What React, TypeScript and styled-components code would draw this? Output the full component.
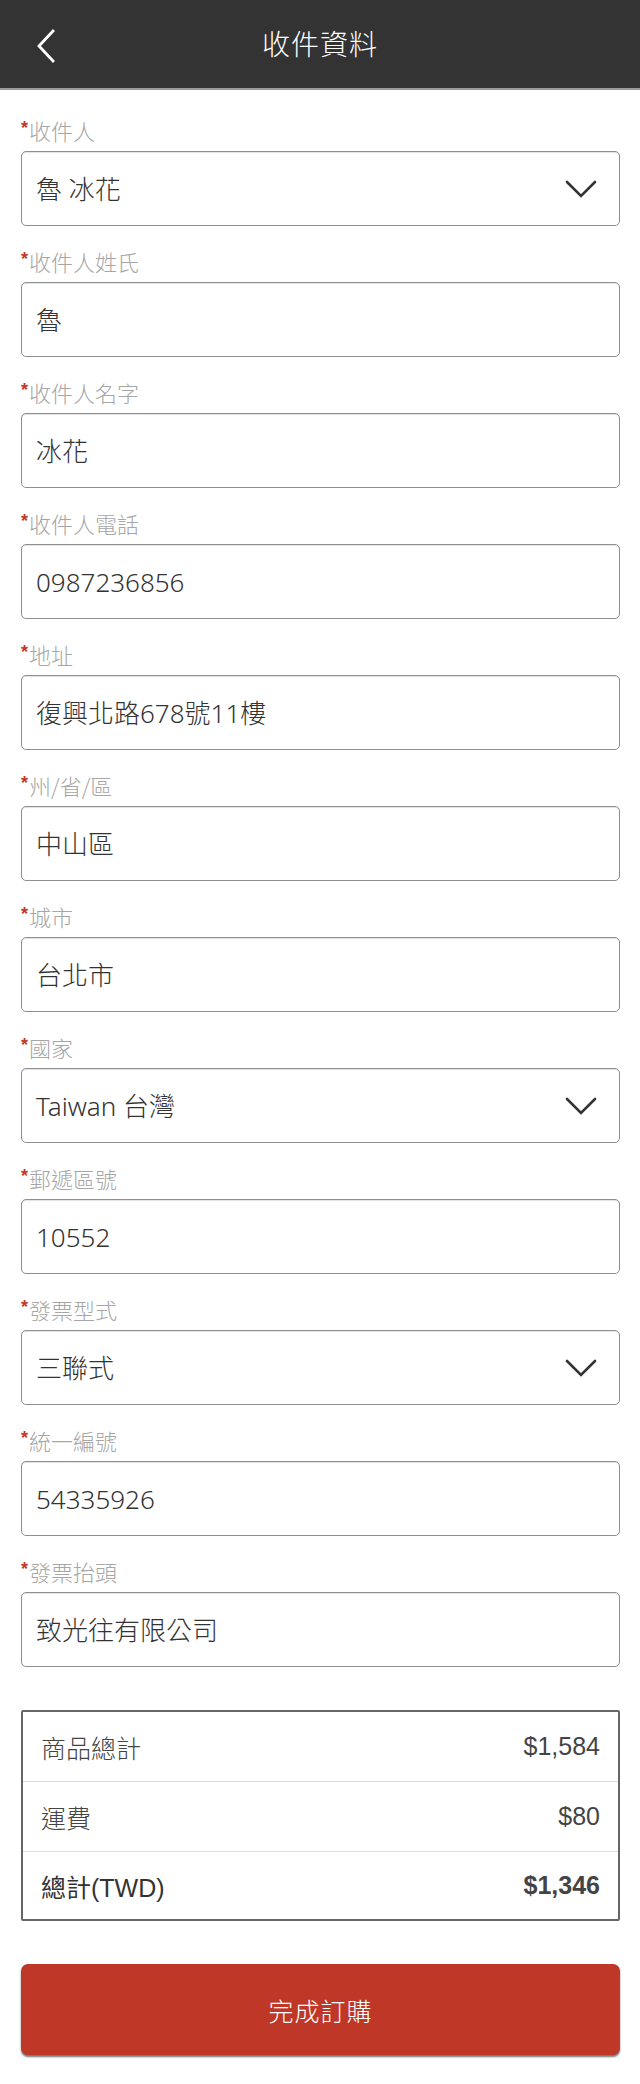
import React from "react";
import styled, { createGlobalStyle } from "styled-components";

const Global = createGlobalStyle`
  html, body { margin: 0; padding: 0; background: #fff; }
  body { font-family: "Liberation Sans", Arial, "Noto Sans CJK TC", sans-serif; }
  * { box-sizing: border-box; }
`;

const Page = styled.div`
  width: 640px;
  min-height: 2084px;
  background: #fff;
  display: flex;
  flex-direction: column;
`;

const Header = styled.header`
  height: 90px;
  background: #333333;
  border-bottom: 2px solid #9a9a9a;
  display: flex;
  align-items: center;
  justify-content: center;
  position: relative;
  flex-shrink: 0;
`;

const BackButton = styled.button`
  position: absolute;
  left: 30px;
  top: 26px;
  width: 32px;
  height: 40px;
  border: 0;
  background: transparent;
  padding: 0;
  display: flex;
  align-items: center;
  justify-content: center;
  cursor: pointer;
`;

const Title = styled.h1`
  margin: 0;
  color: #fff;
  font-family: "Noto Sans CJK TC", sans-serif;
  font-weight: 300;
  font-size: 28px;
  letter-spacing: 1px;
  line-height: 1;
  margin-top: -2px;
`;

const Form = styled.main`
  display: flex;
  flex-direction: column;
  padding: 28px 20px 31px 21px;
`;

const FieldGroup = styled.div`
  display: flex;
  flex-direction: column;
  margin-bottom: 23px;
`;

const Label = styled.label`
  font-family: "Noto Sans CJK TC", sans-serif;
  font-weight: 300;
  font-size: 22px;
  line-height: 24px;
  height: 24px;
  color: #a6a6a6;
  margin-bottom: 9px;
  display: flex;
  align-items: flex-start;
`;

const Star = styled.span`
  color: #c0392b;
  font-family: "Liberation Sans", Arial, sans-serif;
  font-weight: 700;
  font-size: 18px;
  line-height: 20px;
  margin-right: 1px;
`;

const Box = styled.div`
  height: 75px;
  border: 1.5px solid #8f8f8f;
  border-radius: 5px;
  box-shadow: inset 0 1px 1px rgba(0, 0, 0, 0.12);
  background: #fff;
  display: flex;
  align-items: center;
  padding: 0 22px 0 14px;
`;

const Value = styled.span`
  flex: 1;
  font-family: "Noto Sans", "Noto Sans CJK TC", sans-serif;
  font-weight: 300;
  font-size: 26px;
  color: #333;
  line-height: 1;
`;

const Summary = styled.section`
  margin-top: 20px;
  border: 2px solid #666;
  border-radius: 2px;
  display: flex;
  flex-direction: column;
`;

const Row = styled.div<{ $last?: boolean }>`
  height: ${(p) => (p.$last ? "67px" : "70px")};
  display: flex;
  align-items: center;
  justify-content: space-between;
  padding: 0 18px 0 18px;
  border-bottom: ${(p) => (p.$last ? "none" : "1.5px solid #dcdcdc")};
  font-family: "Liberation Sans", Arial, "Noto Sans CJK TC", sans-serif;
  font-size: 25px;
  color: #444;
`;

const RowLabel = styled.span<{ $strong?: boolean }>`
  font-weight: ${(p) => (p.$strong ? 400 : 300)};
  color: ${(p) => (p.$strong ? "#333" : "#444")};
`;

const RowValue = styled.span<{ $strong?: boolean }>`
  font-weight: ${(p) => (p.$strong ? 700 : 400)};
  color: #444;
`;

const Submit = styled.button`
  margin-top: 43px;
  height: 91px;
  width: 100%;
  border: 0;
  border-radius: 7px;
  background: #bf3727;
  box-shadow: 0 2px 2px rgba(0, 0, 0, 0.55);
  color: #fff;
  font-family: "Noto Sans CJK TC", sans-serif;
  font-weight: 300;
  font-size: 25px;
  letter-spacing: 1px;
  cursor: pointer;
`;

const ChevronDown = () => (
  <svg width="32" height="20" viewBox="0 0 32 20" fill="none">
    <path d="M2 3 L16 17 L30 3" stroke="#333" strokeWidth="2.6" strokeLinecap="round" strokeLinejoin="miter" />
  </svg>
);

const ChevronLeft = () => (
  <svg width="20" height="34" viewBox="0 0 20 34" fill="none">
    <path d="M17 2 L3 17 L17 32" stroke="#fff" strokeWidth="2.8" strokeLinecap="square" />
  </svg>
);

type Field = { label: string; value: string; select?: boolean };

const fields: Field[] = [
  { label: "收件人", value: "魯 冰花", select: true },
  { label: "收件人姓氏", value: "魯" },
  { label: "收件人名字", value: "冰花" },
  { label: "收件人電話", value: "0987236856" },
  { label: "地址", value: "復興北路678號11樓" },
  { label: "州/省/區", value: "中山區" },
  { label: "城市", value: "台北市" },
  { label: "國家", value: "Taiwan 台灣", select: true },
  { label: "郵遞區號", value: "10552" },
  { label: "發票型式", value: "三聯式", select: true },
  { label: "統一編號", value: "54335926" },
  { label: "發票抬頭", value: "致光往有限公司" },
];

export default function App() {
  return (
    <>
      <Global />
      <Page>
        <Header>
          <BackButton aria-label="返回">
            <ChevronLeft />
          </BackButton>
          <Title>收件資料</Title>
        </Header>
        <Form>
          {fields.map((f) => (
            <FieldGroup key={f.label}>
              <Label>
                <Star>*</Star>
                {f.label}
              </Label>
              <Box>
                <Value>{f.value}</Value>
                {f.select && <ChevronDown />}
              </Box>
            </FieldGroup>
          ))}
          <Summary>
            <Row>
              <RowLabel>商品總計</RowLabel>
              <RowValue>$1,584</RowValue>
            </Row>
            <Row>
              <RowLabel>運費</RowLabel>
              <RowValue>$80</RowValue>
            </Row>
            <Row $last>
              <RowLabel $strong>總計(TWD)</RowLabel>
              <RowValue $strong>$1,346</RowValue>
            </Row>
          </Summary>
          <Submit>完成訂購</Submit>
        </Form>
      </Page>
    </>
  );
}
